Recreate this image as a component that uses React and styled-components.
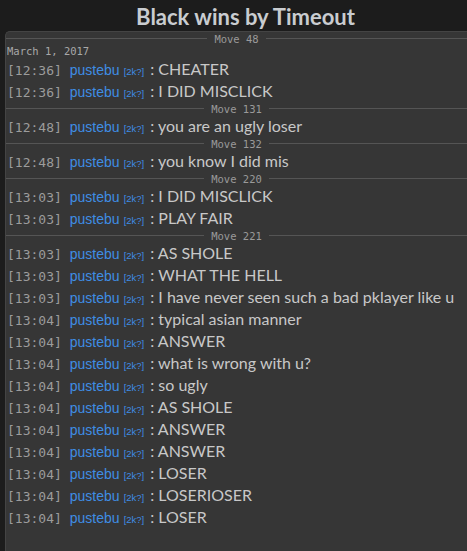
import React from "react";
import styled, { createGlobalStyle } from "styled-components";

const GlobalStyle = createGlobalStyle`
  html, body {
    margin: 0;
    padding: 0;
    background: #1c1c1c;
    overflow: hidden;
  }
`;

const Page = styled.div`
  width: 467px;
  height: 551px;
  display: flex;
  flex-direction: column;
  background: #1c1c1c;
`;

const Title = styled.h1`
  margin: 0;
  height: 31px;
  padding-left: 24px;
  line-height: 33px;
  text-align: center;
  font-family: Lato, "Open Sans", sans-serif;
  font-weight: 700;
  font-size: 22px;
  color: #c9ccd0;
`;

const Panel = styled.div`
  flex: 1;
  margin-left: 5px;
  background: #363636;
  border-top: 1px solid #444;
  border-left: 1px solid #444;
  border-top-left-radius: 5px;
  overflow: hidden;
`;

const MoveDivider = styled.div`
  display: flex;
  align-items: center;
  gap: 7px;
  height: 13px;
  font-family: "DejaVu Sans Mono", monospace;
  font-size: 10.5px;
  color: #9a9a9a;

  &::before,
  &::after {
    content: "";
    flex: 1;
    height: 1px;
    background: #555;
  }
`;

const DateLine = styled.div`
  height: 13px;
  line-height: 13px;
  padding-left: 1px;
  font-family: "DejaVu Sans Mono", monospace;
  font-size: 10.5px;
  color: #a8a8a8;
`;

const Row = styled.div`
  display: flex;
  align-items: baseline;
  height: 22px;
  line-height: 22px;
  padding-left: 1px;
  white-space: nowrap;
`;

const Time = styled.span`
  font-family: "DejaVu Sans Mono", monospace;
  font-size: 13px;
  color: #9c9c9c;
  margin-right: 8px;
`;

const User = styled.span`
  font-family: "Liberation Sans", Arial, sans-serif;
  font-size: 14px;
  color: #3f8de4;
`;

const Rank = styled.span`
  font-family: "Liberation Sans", Arial, sans-serif;
  font-size: 9.5px;
  color: #3f8de4;
  margin-left: 4px;
  margin-right: 6px;
`;

const Message = styled.span`
  font-family: Lato, "Open Sans", sans-serif;
  font-size: 16px;
  color: #c8c8c8;
`;

const log = [
  { move: 48 },
  { date: "March 1, 2017" },
  { t: "12:36", m: "CHEATER" },
  { t: "12:36", m: "I DID MISCLICK" },
  { move: 131 },
  { t: "12:48", m: "you are an ugly loser" },
  { move: 132 },
  { t: "12:48", m: "you know I did mis" },
  { move: 220 },
  { t: "13:03", m: "I DID MISCLICK" },
  { t: "13:03", m: "PLAY FAIR" },
  { move: 221 },
  { t: "13:03", m: "AS SHOLE" },
  { t: "13:03", m: "WHAT THE HELL" },
  { t: "13:03", m: "I have never seen such a bad pklayer like u" },
  { t: "13:04", m: "typical asian manner" },
  { t: "13:04", m: "ANSWER" },
  { t: "13:04", m: "what is wrong with u?" },
  { t: "13:04", m: "so ugly" },
  { t: "13:04", m: "AS SHOLE" },
  { t: "13:04", m: "ANSWER" },
  { t: "13:04", m: "ANSWER" },
  { t: "13:04", m: "LOSER" },
  { t: "13:04", m: "LOSERIOSER" },
  { t: "13:04", m: "LOSER" },
];

const App = () => {
  return (
    <>
      <GlobalStyle />
      <Page>
        <Title>Black wins by Timeout</Title>
        <Panel>
          {log.map((item, i) => {
            if (item.move) return <MoveDivider key={i}>Move {item.move}</MoveDivider>;
            if (item.date) return <DateLine key={i}>{item.date}</DateLine>;
            return (
              <Row key={i}>
                <Time>[{item.t}]</Time>
                <User>pustebu</User>
                <Rank>[2k?]</Rank>
                <Message>: {item.m}</Message>
              </Row>
            );
          })}
        </Panel>
      </Page>
    </>
  );
};

export default App;
